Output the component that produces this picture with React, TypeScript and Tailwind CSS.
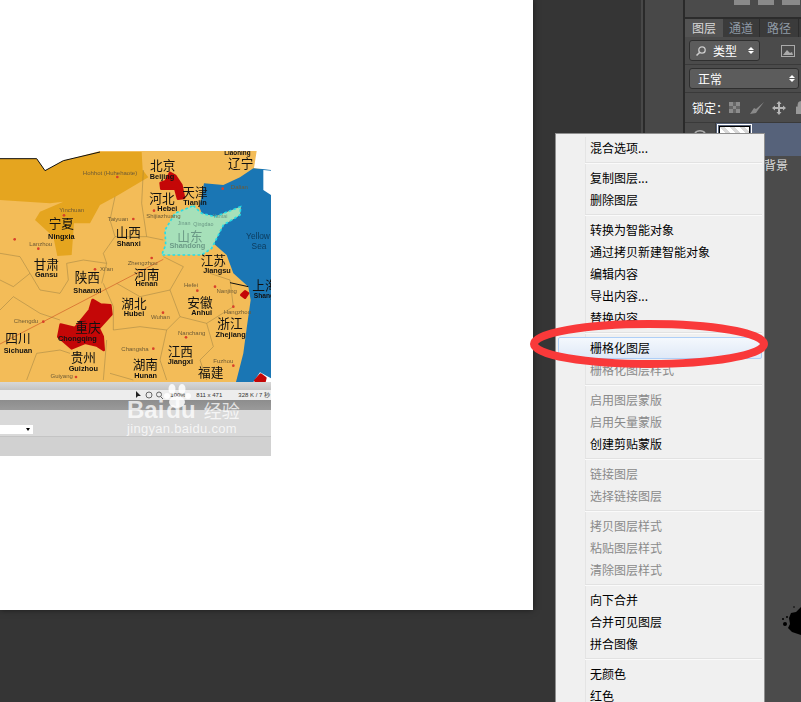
const cjk = "font-['Noto_Sans_CJK_SC','Noto_Sans',sans-serif]";

type Item = { t: string; d?: boolean; hi?: boolean };
const groups: Item[][] = [
  [{ t: "混合选项..." }],
  [{ t: "复制图层..." }, { t: "删除图层" }],
  [{ t: "转换为智能对象" }, { t: "通过拷贝新建智能对象" }, { t: "编辑内容" }, { t: "导出内容..." }, { t: "替换内容" }],
  [{ t: "栅格化图层", hi: true }, { t: "栅格化图层样式", d: true }],
  [{ t: "启用图层蒙版", d: true }, { t: "启用矢量蒙版", d: true }, { t: "创建剪贴蒙版" }],
  [{ t: "链接图层", d: true }, { t: "选择链接图层", d: true }],
  [{ t: "拷贝图层样式", d: true }, { t: "粘贴图层样式", d: true }, { t: "清除图层样式", d: true }],
  [{ t: "向下合并" }, { t: "合并可见图层" }, { t: "拼合图像" }],
  [{ t: "无颜色" }, { t: "红色" }],
];

const zh: [string, number, number][] = [
  ["北京", 488, 90], ["河北", 486, 188], ["天津", 585, 172], ["辽宁", 722, 84], ["宁夏", 184, 265], ["山西", 385, 291],
  ["甘肃", 139, 388], ["陕西", 262, 426], ["河南", 440, 416], ["江苏", 640, 376], ["湖北", 402, 503], ["安徽", 600, 500],
  ["浙江", 690, 563], ["四川", 54, 610], ["重庆", 264, 575], ["贵州", 250, 665], ["江西", 541, 648], ["湖南", 436, 687], ["福建", 632, 712],
];
const en: [string, number, number][] = [
  ["Beijing", 486, 118], ["Hebei", 502, 212], ["Tianjin", 585, 194], ["Ningxia", 184, 297], ["Shanxi", 386, 317], ["Gansu", 139, 412],
  ["Shaanxi", 262, 459], ["Henan", 440, 438], ["Jiangsu", 651, 399], ["Hubei", 402, 529], ["Anhui", 605, 526], ["Zhejiang", 692, 590],
  ["Sichuan", 54, 638], ["Chongqing", 232, 604], ["Guizhou", 250, 693], ["Jiangxi", 541, 672], ["Hunan", 437, 715],
];
const city: [string, number, number][] = [
  ["Hohhot (Huhehaote)", 330, 104], ["Yinchuan", 215, 217], ["Taiyuan", 354, 242], ["Shijiazhuang", 490, 235], ["Dalian", 718, 148],
  ["Lanzhou", 122, 317], ["Xi'an", 320, 393], ["Zhengzhou", 428, 375], ["Hefei", 573, 442], ["Nanjing", 680, 460], ["Hangzhou", 712, 521],
  ["Chengdu", 78, 550], ["Nanchang", 575, 586], ["Changsha", 405, 632], ["Fuzhou", 670, 670], ["Guiyang", 185, 715], ["Wuhan", 481, 538],
];
const dots: [number, number][] = [[352, 111], [192, 226], [400, 237], [462, 212], [668, 146], [115, 326], [285, 388], [455, 354], [592, 452], [645, 440], [700, 500], [130, 545], [558, 592], [460, 626], [700, 677], [228, 711], [489, 518], [44, 298]];
const borders = [
  "M345 170 L330 240 L345 290 L310 340 L320 370 L305 430 M320 370 L250 360 L200 370 L205 420 L180 460 L120 450 L90 400 L60 350 L0 340",
  "M430 90 L425 190 L440 290 L490 300 M345 290 L440 290 M350 430 L420 470 L510 450 L550 380 L490 350",
  "M510 450 L540 530 L620 550 L700 500 L690 420 L630 400 M540 530 L500 570 L480 660 L500 720 M620 550 L640 620 L600 660 L620 720",
  "M310 430 L340 500 L340 570 L420 560 L500 570 M320 600 L310 720 M0 420 L40 440 L90 400 M0 510 L40 470 L120 520 L180 540",
  "M80 720 L110 640 L180 630 L210 640 M330 700 L400 720",
];

function ChinaMap() {
  return (
    <svg viewBox="0 33 813 693" className="block w-[271px] h-[231px] blur-[0.4px]">
      <rect x="0" y="33" width="813" height="693" fill="#f3bc58" />
      <path d="M0 33 H430 L300 33 L190 62 L135 92 L110 56 L0 56Z" fill="#fff" />
      <path d="M0 56 H110 L135 92 L190 62 L300 36 L425 36 L428 90 L445 112 L350 168 L300 195 L270 250 L222 250 L215 345 L172 348 L160 290 L105 240 L120 215 L190 185 L150 190 L80 185 L0 180Z" fill="#e5a51f" />
      <path d="M813 88 L760 85 L720 112 L670 135 L612 130 L598 200 L605 220 L645 230 L722 200 L720 225 L670 255 L640 310 L680 345 L700 400 L745 440 L752 480 L740 565 L730 640 L708 726 H813Z" fill="#1a76b4" />
      <path d="M770 33 H813 V90 L762 84Z M790 90 L813 92 V165 L790 150Z M760 726 L780 697 L813 715 V726Z" fill="#fff" />
      <path d="M0 56 H110 L135 92 L190 62 L300 36" fill="none" stroke="#111" strokeWidth="3" />
      <path d={borders.join(" ")} fill="none" stroke="#8a7440" strokeWidth="1.300" />
      <path d="M0 612 L130 545 L490 358" fill="none" stroke="#cf5a25" strokeWidth="2" />
      <path d="M690 428 L745 440" fill="none" stroke="#111" strokeWidth="3" />
      <g fill="#c40707" stroke="#c40707" strokeWidth="8" strokeLinejoin="round">
        <path d="M510 99 L526 108 L544 135 L552 174 L534 176 L526 146 L484 146 L482 129 L497 124Z" />
        <path d="M278 480 L302 494 L331 496 L334 523 L296 565 L308 590 L311 630 L290 616 L255 608 L215 625 L175 590 L182 554 L225 564 L269 510Z" />
        <path d="M735 454 L744 460 L735 473 L724 465Z" />
        <path d="M782 704 L796 714 L793 726 L766 722Z" />
      </g>
      <path d="M580 197 L605 220 L645 230 L722 200 L720 225 L670 255 L655 285 L635 325 L605 345 L575 345 L485 345 L497 315 L495 270 L525 220Z" fill="#a6e0b9" stroke="#27dde6" strokeWidth="5" strokeDasharray="8 7" />
      <g fontFamily="'Liberation Sans',sans-serif" fill="#6d5a35" fontSize="18" textAnchor="middle">
        {city.map(([t, x, y]) => <text key={t} x={x} y={y}>{t}</text>)}
      </g>
      <g fill="#d8402a">{dots.map(([x, y], i) => <circle key={i} cx={x} cy={y} r="4" />)}</g>
      <g fontFamily="'Noto Sans CJK SC',sans-serif" fill="#111" fontSize="38" textAnchor="middle">
        {zh.map(([t, x, y]) => <text key={t} x={x} y={y}>{t}</text>)}
      </g>
      <g fontFamily="'Liberation Sans',sans-serif" fill="#111" fontSize="22" fontWeight="700" textAnchor="middle">
        {en.map(([t, x, y]) => <text key={t} x={x} y={y}>{t}</text>)}
      </g>
      <g fontFamily="'Liberation Sans',sans-serif" textAnchor="middle">
        <text x="562" y="323" fontSize="22" fontWeight="700" fill="#6c9a86">Shandong</text>
        <text x="552" y="256" fontSize="16" fill="#6c9a86">Jinan</text>
        <text x="610" y="258" fontSize="16" fill="#6c9a86">Qingdao</text>
        <text x="660" y="235" fontSize="16" fill="#6c9a86">Yantai</text>
        <text x="774" y="298" fontSize="25" fill="#0c3a5c">Yellow</text>
        <text x="777" y="328" fontSize="25" fill="#0c3a5c">Sea</text>
        <text x="792" y="474" fontSize="20" fontWeight="700" fill="#111">Shang</text>
        <text x="712" y="45" fontSize="19" fontWeight="700" fill="#111">Liaoning</text>
      </g>
      <text x="570" y="302" fontSize="38" textAnchor="middle" fontFamily="'Noto Sans CJK SC',sans-serif" fill="#6c9a86">山东</text>
      <text x="795" y="450" fontSize="38" textAnchor="middle" fontFamily="'Noto Sans CJK SC',sans-serif" fill="#111">上海</text>
    </svg>
  );
}

function Document() {
  return (
    <div className="w-[533px] h-[610px] bg-white shadow-[0_0_6px_rgba(0,0,0,0.5)] pt-[151px] shrink-0">
      <div className="w-[271px]">
        <ChinaMap />
        <div className="h-[8px] bg-gradient-to-b from-[#d8d8d8] to-[#c4c4c4]" />
        <div className="h-[10px] bg-[#ededed] flex items-center justify-end pr-[1px] text-[6px] leading-none text-[#333] font-['Liberation_Sans',sans-serif] whitespace-nowrap overflow-hidden">
          <svg width="30" height="8" viewBox="0 0 30 8" className="mr-[5px] shrink-0"><path d="M1 0v7l2-2h3z" fill="#222" /><circle cx="14" cy="4" r="3" fill="none" stroke="#666" /><circle cx="24" cy="3.500" r="2.500" fill="none" stroke="#666" /><path d="M26 6l2 2" stroke="#666" /></svg>
          <span className="w-[26px]">100%</span><span className="w-[42px]">811 x 471</span><span>328 K / 7 秒</span>
        </div>
        <div className="h-[10px] bg-gradient-to-b from-[#8d8d8d] to-[#9a9a9a]" />
        <div className="h-[27px] bg-[#d9d9d9] border-b border-[#c4c4c4] flex items-end pb-[2px]">
          <div className="w-[33px] h-[9px] bg-white flex items-center justify-end pr-[3px]">
            <div className="border-x-[2px] border-x-transparent border-t-[3px] border-t-black" />
          </div>
        </div>
        <div className="h-[19px] bg-[#d1d1d1]" />
      </div>
    </div>
  );
}

function RightPanels() {
  return (
    <div className="w-[160px] h-full flex shrink-0 ml-[108px] bg-[#484848]">
      <div className="w-[44px] pl-[2px] h-full shrink-0">
        <div className="h-full border-x-[2px] border-[#2a2a2a]" />
      </div>
      <div className={`flex-1 bg-[#4b4b4b] text-[12px] ${cjk} overflow-hidden`}>
        <div className="h-[19px] border-b-[2px] border-[#2c2c2c] flex items-start gap-[8px] pl-[49px]">
          <div className="w-[16px] h-[5px] bg-[#8a8a8a]" />
          <div className="w-[16px] h-[5px] bg-[#8a8a8a]" />
          <div className="w-[18px] h-[5px] bg-[#8a8a8a]" />
        </div>
        <div className="flex h-[18px] bg-[#3b3b3b] text-[#8f9aa6] leading-[18px]">
          <div className="w-[38px] bg-[#535353] text-center text-[#d8d8d8]">图层</div>
          <div className="w-[37px] text-center border-r border-[#2c2c2c]">通道</div>
          <div className="w-[39px] text-center border-r border-[#2c2c2c]">路径</div>
        </div>
        <div className="h-[28px] flex items-center pl-[4px] border-b border-[#3a3a3a]">
          <div className="w-[71px] h-[21px] rounded-[3px] bg-[#5c5c5c] border border-[#2f2f2f] flex items-center text-white px-[5px]">
            <svg width="12" height="12" viewBox="0 0 12 12" className="mr-[6px]"><circle cx="7" cy="5" r="3.200" fill="none" stroke="#ccc" strokeWidth="1.300" /><path d="M4.600 7.500 1.500 10.500" stroke="#ccc" strokeWidth="1.600" /></svg>
            <span className="flex-1 leading-none">类型</span>
            <span className="flex flex-col gap-[1px]">
              <span className="border-x-[3px] border-x-transparent border-b-[3px] border-b-white" />
              <span className="border-x-[3px] border-x-transparent border-t-[3px] border-t-white" />
            </span>
          </div>
          <svg width="14" height="12" viewBox="0 0 14 12" className="ml-[21px]"><rect x="0.500" y="0.500" width="13" height="11" fill="none" stroke="#aaa" /><path d="M2 10 6 5l3 3 2-1 1 3z" fill="#aaa" /></svg>
        </div>
        <div className="h-[28px] flex items-center pl-[4px] border-b border-[#3a3a3a]">
          <div className="w-[110px] h-[21px] rounded-[3px] bg-[#5c5c5c] border border-[#2f2f2f] flex items-center text-white pl-[8px] pr-[3px]">
            <span className="flex-1 leading-none">正常</span>
            <span className="flex flex-col gap-[1px]">
              <span className="border-x-[3px] border-x-transparent border-b-[3px] border-b-white" />
              <span className="border-x-[3px] border-x-transparent border-t-[3px] border-t-white" />
            </span>
          </div>
        </div>
        <div className="h-[30px] flex items-center pl-[7px] text-white whitespace-nowrap border-b border-[#3a3a3a]">
          <span className="leading-none w-[37px] shrink-0">锁定：</span>
          <svg width="11" height="11" viewBox="0 0 11 11" className="shrink-0"><rect width="11" height="11" fill="#666" /><path d="M0 0h4v4H0zM7 0h4v4H7zM4 4h3v3H4zM0 7h4v4H0zM7 7h4v4H7z" fill="#8b8b8b" /></svg>
          <svg width="16" height="14" viewBox="0 0 16 14" className="shrink-0 ml-[9px]"><path d="M15 1 7 8 5 7 1 13l6-1 2-3z" fill="#8a8a8a" /></svg>
          <svg width="14" height="14" viewBox="0 0 14 14" className="shrink-0 ml-[7px]"><path d="M7 0 9.500 3H8v3h3V4.500L14 7l-3 2.500V8H8v3h1.500L7 14l-2.500-3H6V8H3v1.500L0 7l3-2.500V6h3V3H4.500z" fill="#b5b5b5" /></svg>
          <svg width="10" height="13" viewBox="0 0 10 13" className="shrink-0 ml-[10px]"><path d="M2 6V3.500a3 3 0 0 1 6 0V6M0 6h10v7H0z" fill="#999" stroke="#999" strokeOpacity="0.800" /></svg>
        </div>
        <div className="h-[33px] flex">
          <div className="w-[31px] shrink-0 border-r border-[#3a3a3a] flex justify-center pt-[5px]">
            <svg width="12" height="6" viewBox="0 0 12 6"><path d="M1 5a5.500 4 0 0 1 10 0" fill="none" stroke="#aaa" strokeWidth="1.500" /></svg>
          </div>
          <div className="flex-1 bg-[#56627a] pl-[1px] pt-[1px]">
            <div className="w-[35px] h-[26px] border border-white p-[1px]">
              <div className="h-full border border-black bg-[linear-gradient(45deg,#d8d8d8_25%,#fff_25%,#fff_50%,#d8d8d8_50%,#d8d8d8_75%,#fff_75%)] bg-[length:10px_10px] flex justify-center items-end">
                <div className="w-[12px] h-[2px] bg-[#eaa431]" />
              </div>
            </div>
          </div>
        </div>
        <div className="pl-[79px] text-[#dcdcdc] leading-[18px]">背景</div>
      </div>
    </div>
  );
}

function ContextMenu() {
  return (
    <div className={`absolute left-[555px] top-[133px] w-[210px] h-[569px] bg-[#f0f0f0] border border-b-0 border-[#8f8f8f] overflow-hidden text-[12px] leading-[22px] text-black ${cjk}`}>
      <div className="absolute left-[29px] top-[3px] bottom-0 w-px bg-[#e4e4e4]" />
      <div className="relative pt-[3px]">
        {groups.map((g, i) => (
          <div key={i}>
            {i > 0 && <div className="ml-[29px] mr-[2px] my-[3px] h-[2px] bg-[#fafafa] border-t border-[#e2e2e2]" />}
            {g.map((it) => (
              <div key={it.t} className={`h-[22px] whitespace-nowrap ${it.d ? "text-[#8a8a8a]" : ""} ${it.hi ? "mx-[2px] pl-[31px] border border-[#aecff7] rounded-[2px] bg-gradient-to-b from-[#f4f8fd] to-[#dfe9f7] leading-[20px]" : "pl-[34px]"}`}>{it.t}</div>
            ))}
          </div>
        ))}
      </div>
    </div>
  );
}

function Overlays() {
  return (
    <>
      <svg className="absolute left-[528px] top-[316px]" width="244" height="56" viewBox="0 0 244 56">
        <ellipse cx="121" cy="28" rx="115" ry="20" fill="none" stroke="#f9393a" strokeWidth="8" />
      </svg>
      <div className="absolute left-[127px] top-[383px] w-[118px] h-[56px] text-white/75 font-['Liberation_Sans',sans-serif]">
        <svg className="absolute left-[36px] top-[0px]" width="30" height="26" viewBox="0 0 30 26">
          <g fill="#fff" fillOpacity="0.850"><ellipse cx="9" cy="6" rx="3.500" ry="5" /><ellipse cx="19" cy="6" rx="3.500" ry="5" /><circle cx="4" cy="13" r="3" /><circle cx="25" cy="13" r="3" /><ellipse cx="14" cy="19" rx="8" ry="6" /></g>
        </svg>
        <div className="absolute left-0 top-[15px] flex items-center text-[24px] font-bold leading-none whitespace-nowrap">
          <span>Bai</span><span className="ml-[2px]">du</span><span className={`ml-[8px] text-[18px] font-normal ${cjk}`}>经验</span>
        </div>
        <div className="absolute left-0 top-[39px] text-[13px] leading-none whitespace-nowrap tracking-[0.3px]">jingyan.baidu.com</div>
      </div>
      <svg className="absolute left-[781px] top-[604px] blur-[0.5px]" width="20" height="32" viewBox="0 0 20 32">
        <g fill="#000">
          <path d="M20 3 15 8 10 9 8 14 9 20 7 24 11 28 20 31Z" />
          <circle cx="4" cy="20" r="2" /><circle cx="2" cy="15" r="1" /><circle cx="6" cy="13" r="1" /><circle cx="13" cy="3" r="0.800" />
        </g>
      </svg>
    </>
  );
}

export default function App() {
  return (
    <div className="relative w-[801px] h-[702px] overflow-hidden bg-[#353535] flex">
      <Document />
      <RightPanels />
      <ContextMenu />
      <Overlays />
    </div>
  );
}
